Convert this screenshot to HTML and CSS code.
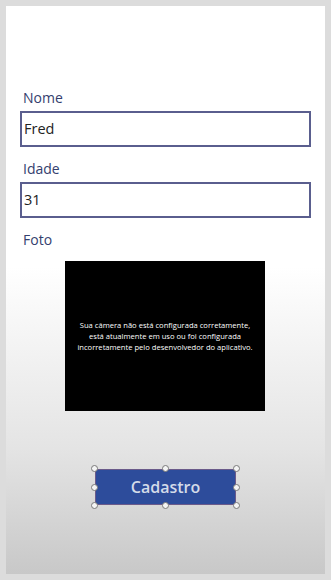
FILE: index.html
```html
<!DOCTYPE html>
<html lang="pt">
<head>
<meta charset="utf-8">
<title>Cadastro</title>
<link rel="stylesheet" href="styles.css">
</head>
<body>
<div class="panel">
  <div class="form">
    <div class="field">
      <div class="label">Nome</div>
      <div class="input">Fred</div>
    </div>
    <div class="field">
      <div class="label">Idade</div>
      <div class="input">31</div>
    </div>
    <div class="field">
      <div class="label">Foto</div>
    </div>
  </div>
  <div class="camera">
    <p>Sua câmera não está configurada corretamente,<br>está atualmente em uso ou foi configurada<br>incorretamente pelo desenvolvedor do aplicativo.</p>
  </div>
  <div class="button-wrap">
    <div class="button">Cadastro
      <span class="h h-tl"></span><span class="h h-tc"></span><span class="h h-tr"></span>
      <span class="h h-ml"></span><span class="h h-mr"></span>
      <span class="h h-bl"></span><span class="h h-bc"></span><span class="h h-br"></span>
    </div>
  </div>
</div>
</body>
</html>
```
FILE: styles.css
```css
html, body {
  margin: 0;
  padding: 0;
}
body {
  width: 331px;
  height: 580px;
  background: #dcdcdc;
  padding: 6px;
  box-sizing: border-box;
  font-family: "Open Sans", "Noto Sans", sans-serif;
  overflow: hidden;
}
.panel {
  height: 568px;
  width: 319px;
  box-sizing: border-box;
  background: linear-gradient(to bottom, #ffffff 0%, #ffffff 46%, #e4e4e4 78%, #c8c8c8 100%);
  display: flex;
  flex-direction: column;
  padding-top: 82px;
}
.form {
  display: flex;
  flex-direction: column;
  padding-left: 14px;
}
.field {
  display: flex;
  flex-direction: column;
  margin-bottom: 12px;
}
.label {
  color: #34406e;
  font-size: 14px;
  line-height: 20px;
  padding-left: 3px;
  margin-bottom: 3px;
}
.input {
  width: 291px;
  height: 36px;
  box-sizing: border-box;
  border: 2px solid #5a5e8e;
  color: #222;
  font-size: 14.5px;
  line-height: 32px;
  padding-left: 2px;
}
.camera {
  margin-left: 59px;
  margin-top: -4px;
  width: 200px;
  height: 150px;
  background: #000;
  display: flex;
  align-items: center;
  justify-content: center;
}
.camera p {
  margin: 0;
  color: #fff;
  font-size: 7.6px;
  line-height: 11px;
  text-align: center;
}
.button-wrap {
  margin-top: 58px;
  padding-left: 89px;
}
.button {
  position: relative;
  width: 141px;
  height: 36px;
  box-sizing: border-box;
  background: #2d4c9b;
  border: 1px solid #6a5a8a;
  color: #d4dbe9;
  font-size: 16px;
  font-weight: 600;
  line-height: 34px;
  text-align: center;
}
.h {
  position: absolute;
  width: 7px;
  height: 7px;
  box-sizing: border-box;
  border-radius: 50%;
  background: #f4f4f4;
  border: 1px solid #7a7a7a;
}
.h-tl { left: -5px; top: -5px; }
.h-tc { left: 66px; top: -5px; }
.h-tr { right: -5px; top: -5px; }
.h-ml { left: -5px; top: 14px; }
.h-mr { right: -5px; top: 14px; }
.h-bl { left: -5px; bottom: -5px; }
.h-bc { left: 66px; bottom: -5px; }
.h-br { right: -5px; bottom: -5px; }
```
